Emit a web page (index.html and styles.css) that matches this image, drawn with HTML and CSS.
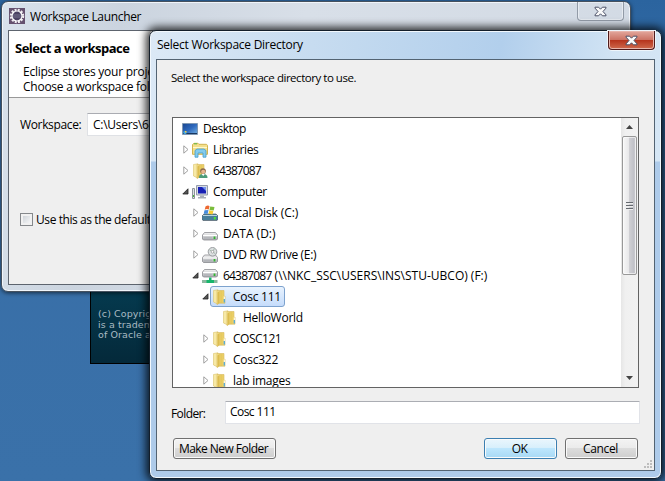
FILE: index.html
```html
<!DOCTYPE html>
<html lang="en">
<head>
<meta charset="utf-8">
<title>Select Workspace Directory</title>
<link rel="stylesheet" href="styles.css">
</head>
<body>
<svg class="defs" width="0" height="0">
  <defs>
    <linearGradient id="gold" x1="0" x2="1"><stop offset="0" stop-color="#f8e79b"/><stop offset=".5" stop-color="#e5c75b"/><stop offset="1" stop-color="#f1d977"/></linearGradient>
    <linearGradient id="screen" x1="0" y1="0" x2="1" y2="1"><stop offset="0" stop-color="#19458f"/><stop offset=".5" stop-color="#2f69bd"/><stop offset="1" stop-color="#78b5e4"/></linearGradient>
    <linearGradient id="metal" x1="0" y1="0" x2="0" y2="1"><stop offset="0" stop-color="#f4f4f4"/><stop offset="1" stop-color="#a9abb0"/></linearGradient>
    <symbol id="folder" viewBox="0 0 16 16">
      <path d="M1.500 1.500 6 .8v14.400L1.500 13z" fill="#f7e9a6" stroke="#dcc26c" stroke-width=".6"/>
      <path d="M5 1.500h7v5l1 1v6.700H6.500L5 15.500z" fill="url(#gold)" stroke="#d6b95c" stroke-width=".6"/>
      <path d="M5.500 3.500 7.500 2v12l-2 1.500z" fill="#dcbc50"/>
      <path d="M12.300 10v3.500" stroke="#4ba8e4" stroke-width="1.200"/><path d="M12.300 7.500v2.500" stroke="#fff"/>
    </symbol>
    <symbol id="drive" viewBox="0 0 16 16">
      <path d="M2.5 6.5h11l2 2.5v4l-1 1h-13l-1-1V9z" fill="url(#metal)" stroke="#8a8c91" stroke-width=".8"/>
      <path d="M1 9.5h14" stroke="#fff"/><path d="M2 11.8h8" stroke="#b0b2b7"/><path d="M12.5 10.5v2.5" stroke="#32b62e" stroke-width="1.8"/>
    </symbol>
    <symbol id="closed" viewBox="0 0 6 9"><path d="M.8.8 5 4.5.8 8.2z" fill="#fff" stroke="#a0a0a0"/></symbol>
    <symbol id="open" viewBox="0 0 7 7"><path d="M6 .8V6H.8z" fill="#555" stroke="#222" stroke-width=".8"/></symbol>
    <symbol id="cross" viewBox="0 0 13 11">
      <path d="M1 1.2h3.6l1.900 2 1.900-2H12v.9L9 5.500l3 3.400v.9H8.400l-1.900-2-1.900 2H1v-.9l3-3.400-3-3.400z" fill="#fafafa" stroke="#4c5267"/>
    </symbol>
  </defs>
</svg>

<div class="splash"><p>(c) Copyrig<br>is a tradem<br>of Oracle a</p></div>

<section class="window launcher">
  <header class="launcher-title">
    <svg width="16" height="16" viewBox="0 0 16 16"><rect width="16" height="16" fill="#65516f"/><circle cx="8" cy="8" r="6.2" fill="none" stroke="#f0edf2" stroke-width="2" stroke-dasharray="2 1.25"/><circle cx="8" cy="8" r="5" fill="#4b4263" stroke="#fff" stroke-width="1.2"/><path d="M4 7h8M4 9h8" stroke="#77708d"/></svg>
    <span>Workspace Launcher</span>
    <div class="close ghost"><svg width="13" height="11"><use href="#cross"/></svg></div>
  </header>
  <div class="launcher-body">
    <div class="intro">
      <h1>Select a workspace</h1>
      <p>Eclipse stores your proje<br>Choose a workspace fol</p>
    </div>
    <div class="field"><label>Workspace:</label><div class="path">C:\Users\64</div></div>
    <div class="default"><i class="check"></i><span>Use this as the default</span></div>
  </div>
</section>

<section class="window dialog">
  <header class="dialog-title"><span>Select Workspace Directory</span>
    <div class="close red"><svg width="13" height="11"><use href="#cross"/></svg></div>
  </header>
  <main class="panel">
    <p class="prompt">Select the workspace directory to use.</p>
    <div class="tree">
      <ul>
        <li class="root"><svg class="icon" viewBox="0 0 16 16"><path d="M.5 2.5h15v11H.5z" fill="url(#screen)" stroke="#8098b3"/><path d="M1 12.5h14" stroke="#193760"/><circle cx="3" cy="11.5" r="1.7" fill="#43a6e0"/><path d="M3 10h1.5v1.5H3z" fill="#f3cc40"/></svg><span class="desk">Desktop</span></li>
        <li class="l1"><svg class="arrow"><use href="#closed"/></svg><svg class="icon" viewBox="0 0 16 16"><path d="M.5 2.5 2 1.3h4l1 1h7.5l1 1v9H.5z" fill="#f4df8a" stroke="#d2b451"/><path d="M2 1.8h3" stroke="#58b849"/><path d="M1 5.5h14" stroke="#fff8cd"/><path d="M3 8.5 5 7h7l2 1.5v6.7h-3V11H6v4.2H3z" fill="#83cbed" stroke="#449ccb" stroke-width=".8"/></svg><span class="libs">Libraries</span></li>
        <li class="l1"><svg class="arrow"><use href="#closed"/></svg><svg class="icon" viewBox="0 0 16 16"><use href="#folder"/><path d="M7 15c0-3 1-4 4-4s4.5 1 4.5 4z" fill="#4d9b7a"/><path d="m9.5 11 1.7 2 1.7-2z" fill="#fff"/><circle cx="11" cy="8" r="2.8" fill="#8b684d"/><circle cx="11.2" cy="8.8" r="2.1" fill="#e7b58d"/></svg><span class="num">64387087</span></li>
        <li class="l1"><svg class="arrow open"><use href="#open"/></svg><svg class="icon" viewBox="0 0 16 16"><path d="M.5 4.5h2v10h-2z" fill="#dde0e4" stroke="#8e949b"/><path d="M1 11h1v2H1z" fill="#49b839"/><path d="M4.500 1.500h11v9.500h-11z" fill="#d6dae2" stroke="#959cab"/><path d="M6 3h8v6.500H6z" fill="#1820b5"/><path d="M10 3h4v4z" fill="#7595ee"/><path d="M8 11.500h4v1.500h2v1.500H6V13h2z" fill="#a9afb8"/></svg><span class="comp">Computer</span></li>
        <li class="l2"><svg class="arrow"><use href="#closed"/></svg><svg class="icon" viewBox="0 0 16 16"><path d="M2 9h12l2 2v3.5l-1 1H1l-1-1V11z" fill="#477e9a" stroke="#56616b" stroke-width=".7"/><path d="M1 10.5h14" stroke="#b8d4df"/><path d="M12.8 12v2.5" stroke="#4ae236" stroke-width="2"/><path d="M3.5 1.5Q6-.3 7.5 1.2L6.8 4.6Q5 3.5 2.7 4.7z" fill="#ed6830"/><path d="m8.2 1.5 4.3.5-.8 3.6-4.2-.7z" fill="#7bbd3c"/><path d="m2.5 5.2 4-.2-.8 3.8-4-.1z" fill="#468cdb"/><path d="m7.2 5.3 4.2.8-.9 3.4-4-.7z" fill="#f7cc35"/></svg><span class="local">Local Disk (C:)</span></li>
        <li class="l2"><svg class="arrow"><use href="#closed"/></svg><svg class="icon"><use href="#drive"/></svg><span class="data">DATA (D:)</span></li>
        <li class="l2"><svg class="arrow"><use href="#closed"/></svg><svg class="icon" viewBox="0 0 16 16"><use href="#drive" y="1.5"/><circle cx="10.5" cy="4.8" r="4.3" fill="#dce0e1" stroke="#9a9da0"/><path d="m10.5 4.8-3-2M10.5 4.8l2-3.3M10.5 4.8l3 2" stroke="#a2b8aa"/><circle cx="10.5" cy="4.8" r="1.3" fill="#fff" stroke="#888" stroke-width=".6"/></svg><span class="dvd">DVD RW Drive (E:)</span></li>
        <li class="l2"><svg class="arrow open"><use href="#open"/></svg><svg class="icon" viewBox="0 0 16 16"><use href="#drive" y="-5"/><path d="M0 13.5h15.5" stroke="#8cb9a0" stroke-width="3"/><path d="M7 9.5h2.5V12H12v3H4.500v-3H7z" fill="#18b66c"/></svg><span class="net"><span class="num">64387087</span> (\\NKC_SSC\USERS\INS\STU-UBCO) (F:)</span></li>
        <li class="l3"><svg class="arrow open"><use href="#open"/></svg><div class="selected"><svg class="icon"><use href="#folder"/></svg><span>Cosc 111</span></div></li>
        <li class="l4"><svg class="icon"><use href="#folder"/></svg><span>HelloWorld</span></li>
        <li class="l3"><svg class="arrow"><use href="#closed"/></svg><svg class="icon"><use href="#folder"/></svg><span class="caps">COSC121</span></li>
        <li class="l3"><svg class="arrow"><use href="#closed"/></svg><svg class="icon"><use href="#folder"/></svg><span>Cosc322</span></li>
        <li class="l3"><svg class="arrow"><use href="#closed"/></svg><svg class="icon"><use href="#folder"/></svg><span>lab images</span></li>
      </ul>
      <div class="scroll">
        <svg class="up" width="7" height="4" viewBox="0 0 7 4"><path d="M0 4 3.500 0 7 4z" fill="#444"/></svg>
        <div class="thumb"><i></i><i></i><i></i></div>
        <svg class="down" width="7" height="4" viewBox="0 0 7 4"><path d="m0 0 3.500 4L7 0z" fill="#444"/></svg>
      </div>
    </div>
    <div class="folder-row"><label>Folder:</label><div class="input">Cosc 111</div></div>
    <div class="buttons"><button class="make"><span>Make New Folder</span></button><button class="ok">OK</button><button class="cancel"><span>Cancel</span></button></div>
    <svg class="grip" width="9" height="9" viewBox="0 0 9 9"><path d="M7 0h2v2H7zM4 3h2v2H4zM7 3h2v2H7zM1 6h2v2H1zM4 6h2v2H4zM7 6h2v2H7z" fill="#bdbdbd"/></svg>
  </main>
</section>
</body>
</html>
```
FILE: styles.css
```css
* { box-sizing: border-box; }
body {
  margin: 0; width: 665px; height: 481px; overflow: hidden; position: relative;
  background: linear-gradient(#2b649f, #386ea7 30%, #3a71a9);
  font: 12px/15px "Open Sans", "Noto Sans", sans-serif; color: #000; letter-spacing: -.25px;
}
p, h1, ul { margin: 0; padding: 0; }
svg { flex: none; display: block; }
.defs { position: absolute; }
.window { position: absolute; border: 1px solid #222; border-radius: 7px; white-space: nowrap; }
.splash {
  position: absolute; left: 90px; top: 285px; width: 110px; height: 79px;
  padding: 23px 0 0 7px; border: 1px solid #000;
  background: linear-gradient(#053b50, #04293a); color: #a9bbc3;
  font: 9.5px/10.5px "DejaVu Sans", sans-serif; letter-spacing: .1px; white-space: nowrap;
}

.launcher {
  left: 1px; top: 1px; width: 630px; height: 291px; padding: 0 6px 6px; overflow: hidden;
  border-color: #46515e;
  background: linear-gradient(100deg, #d9e2ec, #cbd4df 18%, #d8dfe8 45%, #d2dae4);
  box-shadow: inset 0 0 0 1px #f1f5fa, 0 1px 4px #0009;
}
.launcher-title { height: 28px; display: flex; align-items: center; gap: 5px; padding: 0 0 0 1px; }
.launcher-title span { letter-spacing: -.34px; }
.close { display: flex; align-items: center; justify-content: center; align-self: flex-start; margin-left: auto; }
.ghost { width: 47px; height: 19px; border: 1px solid #929ba7; border-top: 0; border-radius: 0 0 4px 4px; box-shadow: inset 0 0 0 1px #e6ebf1; }
.launcher-body { height: 255px; border: 1px solid #5d646e; background: #efefef; }
.intro { height: 67px; background: #fff; border-bottom: 1px solid #999; padding: 9px 0 0 6px; }
.intro h1 { font-size: 13px; line-height: 16px; letter-spacing: -.5px; }
.intro p { margin: 8px 0 0 8px; }
.field { display: flex; align-items: center; margin: 15px 0 0 11px; }
.field label { width: 67px; letter-spacing: -.35px; }
.path { width: 300px; height: 23px; padding: 3px 5px; background: #fff; border: 1px solid #dfe1e5; border-top-color: #aaacb2; }
.default { display: flex; align-items: center; gap: 3px; margin: 76px 0 0 11px; letter-spacing: -.42px; }
.check { width: 13px; height: 13px; border: 1px solid #85888b; background: linear-gradient(135deg, #c5cad0, #fff); box-shadow: inset 0 0 0 2px #f1f1f1; }

.dialog {
  left: 149px; top: 30px; width: 513px; height: 449px; padding: 0 6px 7px;
  border-color: #131e2a;
  background: linear-gradient(#dce9f600 0 130px, #aecbea 131px), linear-gradient(100deg, #dce9f6, #c7dcf0 28%, #b2cfec 60%, #d2e4f4 80%, #d8e8f6);
  box-shadow: inset 0 0 0 1px #f2f8fd, 0 0 9px 3px #000c;
}
.dialog-title { height: 28px; display: flex; }
.dialog-title > span { line-height: 28px; padding-left: 1px; letter-spacing: -.26px; }
.red { width: 47px; height: 19px; border: 1px solid #4f1a1b; border-top: 0; border-radius: 0 0 4px 4px; background: linear-gradient(#e3a89d, #cc7465 48%, #b5321b 50%, #cf6a4d); box-shadow: inset 0 0 0 1px #e7b5ac, 0 0 0 1px #eef5fb; }
.panel { position: relative; height: 412px; border: 1px solid #536372; background: #efefef; padding: 11px 14px 0 14px; }
.prompt { height: 46px; line-height: 14px; font-size: 11.5px; letter-spacing: -.47px; }
.tree { display: flex; width: 467px; height: 271px; margin-left: 1px; border: 1px solid #636363; background: #fff; overflow: hidden; }
.tree ul { flex: 1; list-style: none; }
.tree li { height: 21px; display: flex; align-items: center; padding-left: 10px; }
.tree li.root { padding-left: 9px; }
.tree li.l2 { padding-left: 20px; }
.tree li.l3 { padding-left: 30px; }
.tree li.l4 { padding-left: 49px; }
.desk, .caps { letter-spacing: -.5px; }
.libs { letter-spacing: -.35px; }
.num { letter-spacing: -.9px; }
.comp, .dvd { letter-spacing: -.32px; }
.local { letter-spacing: -.1px; }
.data { letter-spacing: 0; }
.net { letter-spacing: 0; }
.net .num { letter-spacing: -.8px; }
.arrow { width: 6px; height: 9px; margin-right: 3px; }
.arrow.open { width: 7px; height: 7px; margin: 0 3px 0 -1px; }
.icon { width: 16px; height: 16px; margin-right: 5px; }
.selected { display: flex; align-items: center; width: 75px; height: 21px; margin-left: -2px; padding-left: 1px; border: 1px solid #7da2ce; border-radius: 3px; background: linear-gradient(#e9f3fe, #c5dcfb); }
.scroll { width: 17px; display: flex; flex-direction: column; align-items: center; background: linear-gradient(90deg, #e6e6e6, #f0f0f0 25%, #f2f2f2); }
.up { margin: 7px 0; }
.thumb { width: 15px; height: 139px; border: 1px solid #989898; border-radius: 2px; background: linear-gradient(90deg, #f7f7f7, #e8e8ea 45%, #cfcfd3 50%, #c0c1c7 85%, #dedee0); box-shadow: inset 0 0 0 1px #fff9; display: flex; flex-direction: column; align-items: center; justify-content: center; gap: 1px; }
.thumb i { width: 7px; height: 2px; background: #666a70; border-bottom: 1px solid #eee; }
.down { margin: auto 0 7px; }
.folder-row { display: flex; margin-top: 13px; }
.folder-row label { width: 54px; padding-top: 5px; letter-spacing: -.6px; }
.input { width: 415px; height: 23px; padding: 2px 4px; background: #fff; border: 1px solid #e1e3e8; border-top-color: #abadb3; border-radius: 1px; letter-spacing: -.55px; }
.buttons { display: flex; gap: 8px; margin: 14px 0 0 2px; }
button { width: 73px; height: 21px; padding: 0 2px 0 0; border: 1px solid #707070; border-radius: 3px; background: linear-gradient(#f3f3f3, #ebebeb 48%, #dcdcdc 50%, #cecece); box-shadow: inset 0 0 0 1px #fafafa; font: inherit; letter-spacing: -.5px; color: #000; }
.cancel { letter-spacing: -.35px; }
.make { width: 103px; margin-right: 200px; letter-spacing: -.55px; }
.ok { border-color: #3c7fb1; background: linear-gradient(#eaf6fd, #d7effc 48%, #bde6fd 50%, #a7d9f5); }
.grip { position: absolute; right: 2px; bottom: 1px; }
```
